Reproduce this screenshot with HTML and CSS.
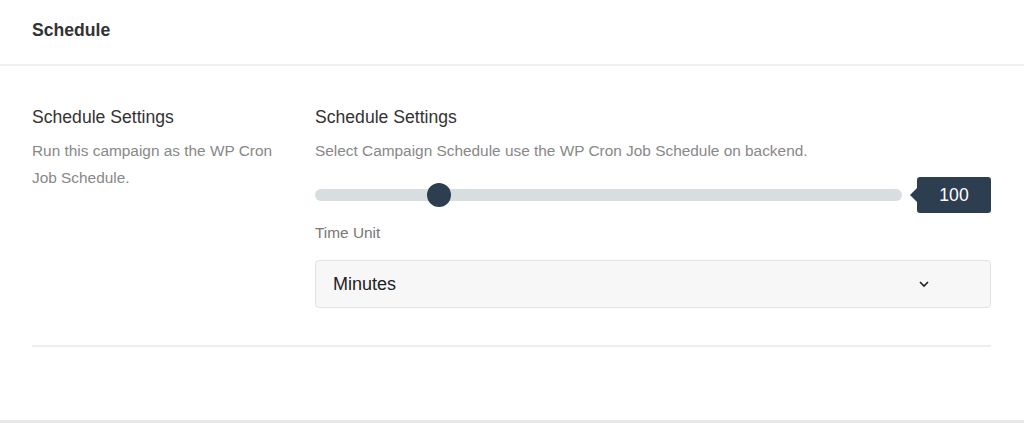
FILE: index.html
```html
<!DOCTYPE html>
<html>
<head>
<meta charset="utf-8">
<link rel="stylesheet" href="styles.css">
</head>
<body>
<div class="panel">
  <div class="header">Schedule</div>
  <div class="content">
    <div class="row">
      <div class="left">
        <div class="title">Schedule Settings</div>
        <div class="desc">Run this campaign as the WP Cron Job Schedule.</div>
      </div>
      <div class="right">
        <div class="title">Schedule Settings</div>
        <div class="help">Select Campaign Schedule use the WP Cron Job Schedule on backend.</div>
        <div class="slider-row">
          <div class="track">
            <div class="thumb" style="left: 21.1%"></div>
          </div>
          <div class="tip">100</div>
        </div>
        <div class="label">Time Unit</div>
        <div class="select">
          <span>Minutes</span>
          <svg class="chev" width="12" height="8" viewBox="0 0 12 8"><path d="M2 2 L6 6 L10 2" fill="none" stroke="#222" stroke-width="1.6"/></svg>
        </div>
      </div>
    </div>
    <div class="divider"></div>
  </div>
</div>
</body>
</html>
```
FILE: styles.css
```css
html, body {
  margin: 0;
  padding: 0;
  background: #fff;
}
body {
  font-family: "Liberation Sans", Arial, sans-serif;
  color: #333;
}
.panel {
  width: 1024px;
  height: 420px;
  border-bottom: 3px solid #e8e8e8;
  box-sizing: content-box;
}
.header {
  height: 66px;
  box-sizing: border-box;
  padding: 20px 32px 0;
  font-size: 17.6px;
  font-weight: bold;
  line-height: 20px;
  color: #333;
  border-bottom: 2px solid #f0f0f0;
}
.content {
  padding: 41px 33px 0 32px;
}
.row {
  display: flex;
}
.left {
  width: 283px;
  flex: none;
}
.right {
  flex: 1;
}
.title {
  font-size: 17.6px;
  line-height: 20px;
  color: #333;
}
.desc {
  margin-top: 10px;
  font-size: 15.4px;
  line-height: 27px;
  color: #888;
  width: 250px;
}
.help {
  margin-top: 10px;
  font-size: 15.4px;
  line-height: 27px;
  color: #888;
}
.slider-row {
  margin-top: 13px;
  display: flex;
  align-items: center;
  height: 36px;
}
.track {
  flex: 1;
  height: 12px;
  border-radius: 6px;
  background: #d8dde0;
  position: relative;
}
.thumb {
  position: absolute;
  top: 50%;
  width: 24px;
  height: 24px;
  margin: -12px 0 0 -12px;
  border-radius: 50%;
  background: #2c3e50;
}
.tip {
  position: relative;
  margin-left: 15px;
  width: 74px;
  height: 36px;
  border-radius: 3px;
  background: #2d3e50;
  color: #fff;
  font-size: 17.6px;
  line-height: 36px;
  text-align: center;
}
.tip::before {
  content: "";
  position: absolute;
  left: -7px;
  top: 11px;
  border-top: 7px solid transparent;
  border-bottom: 7px solid transparent;
  border-right: 7px solid #2d3e50;
}
.label {
  margin-top: 10px;
  font-size: 15.4px;
  line-height: 20px;
  color: #777;
}
.select {
  margin-top: 17px;
  height: 48px;
  box-sizing: border-box;
  border: 1px solid #e2e2e2;
  border-radius: 4px;
  background: #f7f7f7;
  display: flex;
  align-items: center;
  justify-content: space-between;
  padding: 0 60px 0 17px;
  font-size: 18px;
  color: #222;
}
.chev {
  display: block;
}
.divider {
  margin-top: 37px;
  height: 2px;
  background: #eeeeee;
}
```
